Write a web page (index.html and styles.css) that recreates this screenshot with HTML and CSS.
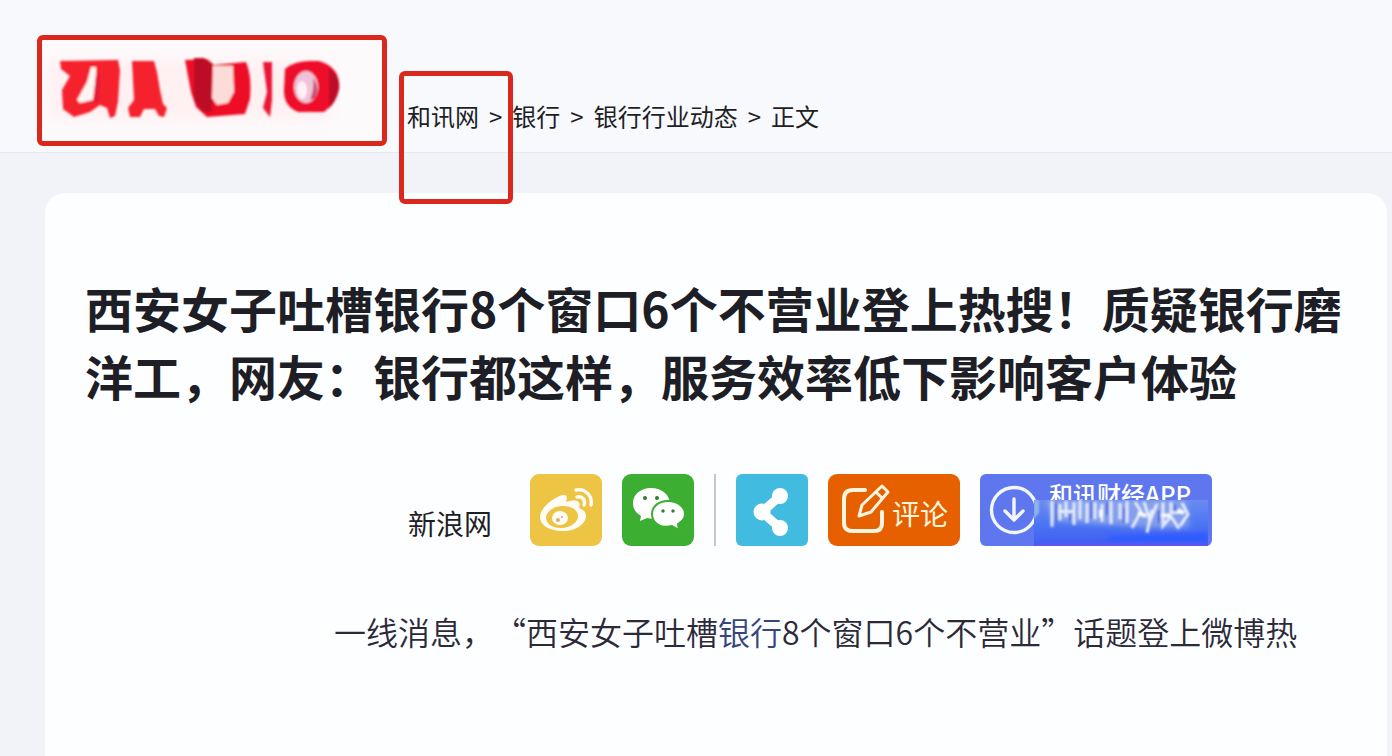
FILE: index.html
```html
<!DOCTYPE html>
<html lang="zh-CN">
<head>
<meta charset="utf-8">
<meta name="viewport" content="width=device-width, initial-scale=1">
<title>西安女子吐槽银行8个窗口6个不营业登上热搜</title>
<link rel="stylesheet" href="styles.css">
</head>
<body>
<header class="header">
  <a class="logo" href="#" aria-label="和讯网">
    <svg class="logo-art" viewBox="0 0 340 100" aria-hidden="true">
      <defs>
        <filter id="soft" x="-5%" y="-5%" width="110%" height="110%"><feGaussianBlur stdDeviation="0.9"/></filter>
        <filter id="haze" x="-10%" y="-20%" width="120%" height="140%"><feGaussianBlur stdDeviation="8"/></filter>
      </defs>
      <rect x="6" y="20" width="280" height="60" fill="#fff0f2" filter="url(#haze)"/>
      <g filter="url(#soft)">
        <path fill="#f5202f" d="M18 21L76 20L78 30L76 62L73 76L68 78L65 68L58 65L48 72L32 77L21 69L20 50L28 36L19 29Z"/>
        <path fill="#fff4f4" d="M49 27L54 27L54 36L51 60L38 63L35 60L45 42Z"/>
        <path fill="#f5202f" d="M90 21L112 21L115 32L118 50L121 64L125 68L122 77L117 76L113 69H102L98 77H88L86 68L92 60Z"/>
        <path fill="#e31c34" d="M54 34L58 34L57 61L52 63Z"/>
        <path fill="#ee1028" d="M143 20L165 19L172 25L204 22Q210 35 208 59L203 74L165 77L154 67L149 52Z"/>
        <path fill="#fcdcd9" d="M171 26L191 26L192 52L186 63L175 65L170 58Z"/>
        <path fill="#bd1028" d="M152 18H162L170 24V72L160 71L152 60Z"/>
        <path fill="#eb1434" d="M221 22H230V60L228 77L221 68L225 52Z"/>
        <path fill="#ee1029" d="M243 29Q252 21 268 21H277Q298 27 297 47Q294 64 282 72L256 72Q241 66 242 49Z"/>
        <path fill="#bd1028" d="M287 28Q299 36 297 50Q294 62 287 68Z"/>
        <ellipse cx="264" cy="47" rx="12" ry="16" fill="#eec2d8"/>
        <ellipse cx="260" cy="50" rx="5" ry="9" fill="#fff0f8"/>
        <path fill="#c8476e" d="M271 38Q278 46 273 58L268 60Q273 48 271 38Z"/>
      </g>
    </svg>
  </a>
  <nav class="crumbs" aria-label="面包屑">
    <span class="crumb-marked"><a href="#">和讯网</a></span>
    <span>&gt;</span>
    <a href="#">银行</a>
    <span>&gt;</span>
    <a href="#">银行行业动态</a>
    <span>&gt;</span>
    <span>正文</span>
  </nav>
</header>
<main class="article">
  <h1 class="title">西安女子吐槽银行8个窗口6个不营业登上热搜！质疑银行磨洋工，网友：银行都这样，服务效率低下影响客户体验</h1>
  <div class="meta">
    <a class="source" href="#">新浪网</a>
    <div class="share">
      <button class="tile weibo" type="button" aria-label="微博">
        <svg viewBox="0 0 72 72" aria-hidden="true">
          <path fill="#fffdf5" d="M34 21C27 21 10 33 10 43C10 52 21 57 33 57C47 57 56 49 56 42C56 37 52 35 49 34C50 31 50 28 47 27C44 25 40 27 36 28C37 25 38 21 34 21Z"/>
          <ellipse cx="32" cy="43" rx="16" ry="11" transform="rotate(-6 32 43)" fill="#edc443"/>
          <ellipse cx="30" cy="44" rx="8" ry="7" fill="#fffdf5"/>
          <circle cx="28" cy="46" r="2" fill="#d2b16d"/><circle cx="32" cy="43" r="1" fill="#d2b16d"/>
          <g fill="none" stroke="#fffdf5" stroke-width="3.4" stroke-linecap="round"><path d="M46 16C55 14 63 22 61 31"/><path d="M47 23C52 22 56 26 54 31"/></g>
        </svg>
      </button>
      <button class="tile wechat" type="button" aria-label="微信">
        <svg viewBox="0 0 72 72" aria-hidden="true">
          <path fill="#fff" d="M29 14C18 14 11 21 11 29C11 35 14 39 19 42L18 47L25 44C38 47 48 40 48 30C48 21 40 14 29 14Z"/>
          <path fill="#fff" stroke="#3caf32" stroke-width="2" d="M46 27C36 27 30 33 30 40C30 49 39 55 50 52L57 56L56 50C61 47 63 44 63 40C63 33 56 27 46 27Z"/>
          <g fill="#357b35"><circle cx="23" cy="24" r="2"/><circle cx="35" cy="24" r="2"/><circle cx="41" cy="37" r="1.7"/><circle cx="51" cy="37" r="1.7"/></g>
        </svg>
      </button>
      <span class="divider"></span>
      <button class="tile nodes" type="button" aria-label="分享">
        <svg viewBox="0 0 72 72" aria-hidden="true">
          <path fill="none" stroke="#fff" stroke-width="9" d="M44 22L26 38L44 54"/>
          <g fill="#fff"><circle cx="44" cy="22" r="8"/><circle cx="26" cy="38" r="8.5"/><circle cx="44" cy="54" r="8"/></g>
        </svg>
      </button>
      <button class="comment" type="button">
        <svg class="comment-icon" viewBox="0 0 52 54" aria-hidden="true">
          <g fill="none" stroke="#fff5df" stroke-width="4" stroke-linecap="round" stroke-linejoin="round">
            <path d="M25 7H13Q4 7 4 16V40Q4 48 13 48H34Q42 48 42 40V29"/>
            <path stroke-width="3" d="M19 33L22 22L42 3L48 9L31 29ZM36 9L42 15"/>
          </g>
        </svg>
        <span>评论</span>
      </button>
      <button class="app" type="button">
        <svg class="app-icon" viewBox="0 0 50 50" aria-hidden="true">
          <g fill="none" stroke="#f2f6ff" stroke-width="3.4" stroke-linecap="round" stroke-linejoin="round"><circle cx="25" cy="25" r="22.5"/><path d="M25 14V35M16 26L25 35L34 26"/></g>
        </svg>
        <span class="app-name">和讯财经APP</span>
        <svg class="app-smear" viewBox="0 0 174 48" preserveAspectRatio="none" aria-hidden="true">
          <defs>
            <linearGradient id="blue" x1="0" y1="0" x2="0" y2="1"><stop offset="0" stop-color="#6b8bf0"/><stop offset=".55" stop-color="#4a74f3"/><stop offset="1" stop-color="#405cf2"/></linearGradient>
            <filter id="smear" x="-5%" y="-10%" width="110%" height="120%"><feGaussianBlur stdDeviation="1.2"/></filter>
            <filter id="glow" x="-10%" y="-50%" width="120%" height="200%"><feGaussianBlur stdDeviation="3"/></filter>
          </defs>
          <rect width="174" height="48" fill="url(#blue)"/>
          <g filter="url(#glow)">
            <path fill="#93a9e8" opacity=".75" d="M12 0H152L155 29L120 29L76 26L20 22Z"/>
            <path fill="#2f5cff" d="M76 37L174 34V44H70Z"/>
          </g>
          <g filter="url(#smear)">
            <path fill="#91b7eb" d="M0 0H5V13L0 20Z"/>
            <g fill="none" stroke="#e4edff" stroke-width="3">
              <path d="M18 1V28M26 4V21M32 1V18M24 12H39M40 2V26M46 0V20M53 3V24M61 2V20M68 4V23M77 1V25M86 3V20M93 1V24"/>
              <path d="M101 2L107 12L98 29M110 2L116 22L123 4M118 10L113 34M129 2V27L137 17L145 30M137 2V13H149M148 3L154 15L146 27"/>
              <path stroke="#f8fcff" stroke-width="4" d="M67 10V18M104 13L112 17M127 16H136M144 10L150 14"/>
            </g>
            <path stroke="#5368d7" stroke-width="2" d="M22 3V24M36 14V22M57 2V20M73 2V16M90 8V24M125 11V24M141 5V12"/>
            <path stroke="#7350ef" stroke-width="2" d="M0 47H174"/>
          </g>
        </svg>
      </button>
    </div>
  </div>
  <p class="lead">一线消息，“西安女子吐槽<a href="#">银行</a>8个窗口6个不营业”话题登上微博热</p>
</main>
</body>
</html>
```

FILE: styles.css
```css
* { box-sizing: border-box; }

body {
  margin: 0;
  min-height: 100vh;
  display: flex;
  flex-direction: column;
  background: #f1f3f9;
  color: #1e1e26;
  font-family: "Noto Sans CJK SC", sans-serif;
}

a { color: inherit; text-decoration: none; }

button {
  border: 0;
  padding: 0;
  color: #fff;
  font-family: inherit;
  cursor: pointer;
}

svg { display: block; }

.header {
  display: flex;
  align-items: flex-start;
  gap: 20px;
  padding: 35px 40px 6px 37px;
  background: #f8f9fc;
  border-bottom: 1px solid #e8eaf0;
}

.logo {
  width: 350px;
  flex: none;
  padding-bottom: 1px;
  border: 5px solid #db281c;
  border-radius: 6px;
  background: #fdfafc;
}

.logo-art { width: 100%; height: auto; }

.crumbs {
  display: flex;
  gap: 10px;
  padding-top: 63px;
  font-size: 24px;
  line-height: 36px;
  white-space: nowrap;
}

.crumb-marked { position: relative; }

.crumb-marked::after {
  content: "";
  position: absolute;
  inset: -27px -34px -70px -8px;
  border: 5px solid #db281c;
  border-radius: 6px;
  pointer-events: none;
}

.article {
  flex: 1;
  margin: 40px 5px 0 45px;
  padding: 80px 40px 40px;
  border-radius: 20px 20px 0 0;
  background: #fdfeff;
}

.title {
  margin: 0;
  font-size: 48px;
  line-height: 68px;
  font-weight: 700;
}

.meta {
  display: flex;
  justify-content: center;
  align-items: center;
  gap: 38px;
  margin-top: 65px;
  padding-left: 188px;
}

.source {
  padding-top: 26px;
  font-size: 28px;
  line-height: 40px;
}

.share {
  display: flex;
  align-items: center;
  gap: 20px;
}

.tile {
  width: 72px;
  height: 72px;
  border-radius: 9px;
}

.weibo { background: #edc443; }
.wechat { background: #3caf32; }
.nodes { background: #41bbe0; border-radius: 6px; }

.divider {
  width: 2px;
  height: 72px;
  background: #c5c6ce;
}

.comment {
  display: flex;
  align-items: center;
  height: 72px;
  padding: 0 12px;
  border-radius: 9px;
  background: #e66000;
  color: #fff5df;
  font-size: 28px;
  line-height: 40px;
}

.comment-icon { width: 52px; height: 54px; }
.comment span { padding-top: 6px; }

.app {
  position: relative;
  display: flex;
  align-items: flex-start;
  gap: 10px;
  width: 232px;
  height: 72px;
  padding: 0 9px;
  border-radius: 6px;
  background: #5e77ee;
}

.app-icon { width: 50px; height: 50px; margin-top: 11px; }

.app-name {
  margin-top: 2px;
  font-size: 24px;
  line-height: 36px;
  font-weight: 500;
  white-space: nowrap;
}

.app-smear {
  position: absolute;
  right: 4px;
  bottom: 0;
  width: 174px;
  height: 46px;
}

.lead {
  margin: 61px 0 0;
  padding-left: 249px;
  font-size: 32px;
  line-height: 48px;
  font-weight: 350;
  color: #2c2a38;
  text-spacing-trim: space-all;
}

.lead a { color: #34457f; }
```
